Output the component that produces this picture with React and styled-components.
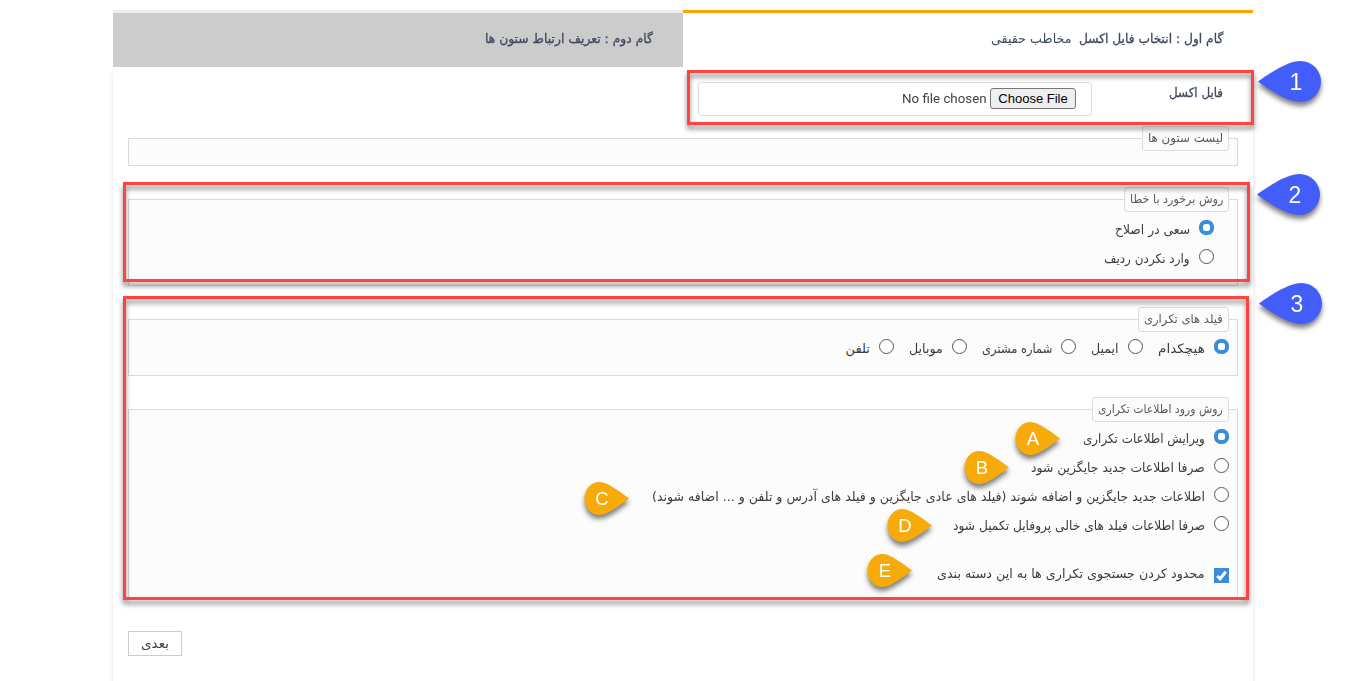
import React, { useLayoutEffect, useRef, useState } from "react";
import styled, { createGlobalStyle } from "styled-components";

const GlobalStyle = createGlobalStyle`
  * { box-sizing: border-box; }
  body {
    margin: 0;
    background: #fff;
    font-family: "DejaVu Sans", sans-serif;
    font-size: 13px;
    color: #3c3c3c;
    overflow: hidden;
  }
`;

const Page = styled.div`
  position: relative;
  width: 1366px;
  height: 681px;
  padding-top: 10px;
  overflow: hidden;
`;

const Wizard = styled.main`
  direction: rtl;
  width: 1140px;
  margin: 0 auto;
`;

const Tabs = styled.nav`
  display: flex;
  height: 57px;
`;

const Tab = styled.div`
  flex: 1;
  display: flex;
  gap: 7px;
  padding: 14px 30px 0;
  line-height: 23px;
  border-top: 3px solid ${(p) => (p.$active ? "#ffa500" : "#eee")};
  background: ${(p) => (p.$active ? "#fff" : "#ccc")};
  color: #3f4a60;
`;

const Panel = styled.section`
  height: 640px;
  padding: 15px;
  background: #fff;
  box-shadow: 0 4px 5px rgba(0, 0, 0, 0.1);
`;

const FileRow = styled.div`
  display: flex;
  justify-content: space-between;
  width: 540px;
  height: 34px;
  padding-right: 15px;
`;

const FileLabel = styled.div`
  line-height: 21px;
  color: #3f4a60;
`;

const FileBox = styled.div`
  display: flex;
  align-items: center;
  gap: 3px;
  width: 394px;
  height: 34px;
  padding: 0 15px 2px 0;
  border: 1px solid #ddd;
  border-radius: 3px;
  font: 13px Roboto, sans-serif;
  color: #444;
`;

const FileButton = styled.button`
  width: 86px;
  height: 21px;
  padding: 1px 0 0;
  border: 1px solid #767676;
  border-radius: 3px;
  background: #efefef;
  color: #000;
  font: 13px/18px "Liberation Sans", sans-serif;
`;

const Group = styled.div`
  height: ${(p) => p.$height}px;
  margin-top: ${(p) => p.$top}px;
  padding-right: ${(p) => p.$indent || 8}px;
  border: 1px solid #dbdbdb;
  background: repeating-conic-gradient(#f9f9f9 0 25%, #fff 0 50%) 0 0 / 4px 4px;
`;

const Legend = styled.div`
  width: fit-content;
  height: 25px;
  margin-top: -13px;
  margin-right: ${(p) => p.$shift || 0}px;
  padding: 0 5px;
  line-height: 23px;
  border: 1px solid #ddd;
  border-radius: 3px;
  background: #fbfbfb;
  color: #5a5a5a;
  font-size: 12px;
`;

const Options = styled.div`
  display: flex;
  flex-direction: ${(p) => (p.$inline ? "row" : "column")};
  column-gap: 15px;
  margin-top: ${(p) => p.$top}px;
`;

const Option = styled.label`
  display: flex;
  align-items: flex-start;
  gap: 9px;
  height: 29px;
  margin-top: ${(p) => p.$top || 0}px;
  line-height: 20px;
`;

const Radio = styled.span`
  width: 15px;
  height: 15px;
  border-radius: ${(p) => (p.$checked ? "6.5px" : "50%")};
  border: ${(p) => (p.$checked ? "4px solid #3a8dd8" : "1px solid #555")};
  background: #fff;
`;

const CheckSvg = styled.svg`
  display: block;
  width: 15px;
  height: 15px;
  margin-top: 4px;
  background: #3a8dd8;
`;

const NextButton = styled.button`
  display: flex;
  justify-content: center;
  width: 54px;
  height: 25px;
  margin: 32px auto 0 0;
  padding: 0;
  border: 1px solid #ccc;
  background: #fff;
  color: #3c3c3c;
  font: 13px/23px "DejaVu Sans", sans-serif;
`;

const FitBox = styled.span`
  display: block;
  flex: none;
  width: ${(p) => p.$width}px;
  white-space: nowrap;
  -webkit-text-stroke: ${(p) => (p.$bold ? "0.3px" : "0")};
`;

const FitInner = styled.span`
  display: inline-block;
  transform-origin: right center;
`;

const Frame = styled.div`
  position: absolute;
  left: ${(p) => p.$x}px;
  top: ${(p) => p.$y}px;
  width: ${(p) => p.$w}px;
  height: ${(p) => p.$h}px;
  border: 3px solid #ff4343;
  filter: drop-shadow(0 4px 2.5px rgba(0, 0, 0, 0.5));
  pointer-events: none;
`;

const PinSvg = styled.svg`
  position: absolute;
  left: ${(p) => p.$x}px;
  top: ${(p) => p.$y}px;
  overflow: visible;
  filter: drop-shadow(0 4px 2.5px rgba(0, 0, 0, 0.5));
  text {
    font-family: "Liberation Sans", sans-serif;
    fill: #fff;
    text-anchor: middle;
  }
`;

function Fit({ width, bold, children }) {
  const ref = useRef(null);
  const [scale, setScale] = useState(1);
  useLayoutEffect(() => {
    setScale(width / ref.current.offsetWidth);
  }, [width]);
  return (
    <FitBox $width={width} $bold={bold}>
      <FitInner ref={ref} style={{ transform: `scaleX(${scale})` }}>{children}</FitInner>
    </FitBox>
  );
}

function Choice({ width, checked, children }) {
  return (
    <Option>
      <Radio $checked={checked} />
      <Fit width={width}>{children}</Fit>
    </Option>
  );
}

function StepPin({ x, y, children }) {
  return (
    <PinSvg $x={x} $y={y} width="63" height="41">
      <path d="M0 20.500C10 13.500 29 0 42.500 0a20.500 20.500 0 0 1 0 41C29 41 10 28 0 20.500Z" fill="#435dfb" />
      <text x="38" y="28.500" fontSize="23">{children}</text>
    </PinSvg>
  );
}

function LetterPin({ x, y, children }) {
  return (
    <PinSvg $x={x} $y={y} width="45" height="33">
      <path d="M45 16.500C37 11 24 0 15.500 0C7 0 0.500 7.500 0.500 16.500S7 33 15.500 33C24 33 37 22.500 45 16.500Z" fill="#f7ab0a" />
      <text x="18" y="23" fontSize="18.500">{children}</text>
    </PinSvg>
  );
}

export default function App() {
  return (
    <Page>
      <GlobalStyle />
      <Wizard>
        <Tabs>
          <Tab $active>
            <Fit width={144} bold>گام اول : انتخاب فایل اکسل</Fit>
            <Fit width={81}>مخاطب حقیقی</Fit>
          </Tab>
          <Tab>
            <Fit width={168} bold>گام دوم : تعریف ارتباط ستون ها</Fit>
          </Tab>
        </Tabs>
        <Panel>
          <FileRow>
            <FileLabel><Fit width={54} bold>فایل اکسل</Fit></FileLabel>
            <FileBox>
              <FileButton type="button">Choose File</FileButton>
              <Fit width={85}>No file chosen</Fit>
            </FileBox>
          </FileRow>

          <Group $top={22} $height={28}>
            <Legend><Fit width={75}>لیست ستون ها</Fit></Legend>
          </Group>

          <Group $top={33} $height={87} $indent={23}>
            <Legend $shift={-15}><Fit width={93}>روش برخورد با خطا</Fit></Legend>
            <Options $top={8}>
              <Choice width={75} checked>سعی در اصلاح</Choice>
              <Choice width={86}>وارد نکردن ردیف</Choice>
            </Options>
          </Group>

          <Group $top={33} $height={57}>
            <Legend><Fit width={79}>فیلد های تکراری</Fit></Legend>
            <Options $inline $top={7}>
              <Choice width={47} checked>هیچکدام</Choice>
              <Choice width={28}>ایمیل</Choice>
              <Choice width={70}>شماره مشتری</Choice>
              <Choice width={34}>موبایل</Choice>
              <Choice width={24}>تلفن</Choice>
            </Options>
          </Group>

          <Group $top={33} $height={190}>
            <Legend><Fit width={125}>روش ورود اطلاعات تکراری</Fit></Legend>
            <Options $top={7}>
              <Choice width={122} checked>ویرایش اطلاعات تکراری</Choice>
              <Choice width={174}>صرفا اطلاعات جدید جایگزین شود</Choice>
              <Choice width={553}>اطلاعات جدید جایگزین و اضافه شوند (فیلد های عادی جایگزین و فیلد های آدرس و تلفن و ... اضافه شوند)</Choice>
              <Choice width={252}>صرفا اطلاعات فیلد های خالی پروفایل تکمیل شود</Choice>
              <Option $top={19}>
                <CheckSvg viewBox="0 0 15 15">
                  <path d="M3.200 8l2.900 2.800L11.700 3.800" fill="none" stroke="#fff" strokeWidth="3" />
                </CheckSvg>
                <Fit width={268}>محدود کردن جستجوی تکراری ها به این دسته بندی</Fit>
              </Option>
            </Options>
          </Group>

          <NextButton type="button"><Fit width={28}>بعدی</Fit></NextButton>
        </Panel>
      </Wizard>

      <Frame $x={687} $y={70} $w={567} $h={55} />
      <Frame $x={123} $y={182} $w={1127} $h={100} />
      <Frame $x={123} $y={296} $w={1126} $h={304} />

      <StepPin x={1258} y={61}>1</StepPin>
      <StepPin x={1257} y={174}>2</StepPin>
      <StepPin x={1259} y={283}>3</StepPin>
      <LetterPin x={1015} y={422}>A</LetterPin>
      <LetterPin x={964} y={451}>B</LetterPin>
      <LetterPin x={584} y={482}>C</LetterPin>
      <LetterPin x={887} y={509}>D</LetterPin>
      <LetterPin x={867} y={554}>E</LetterPin>
    </Page>
  );
}
